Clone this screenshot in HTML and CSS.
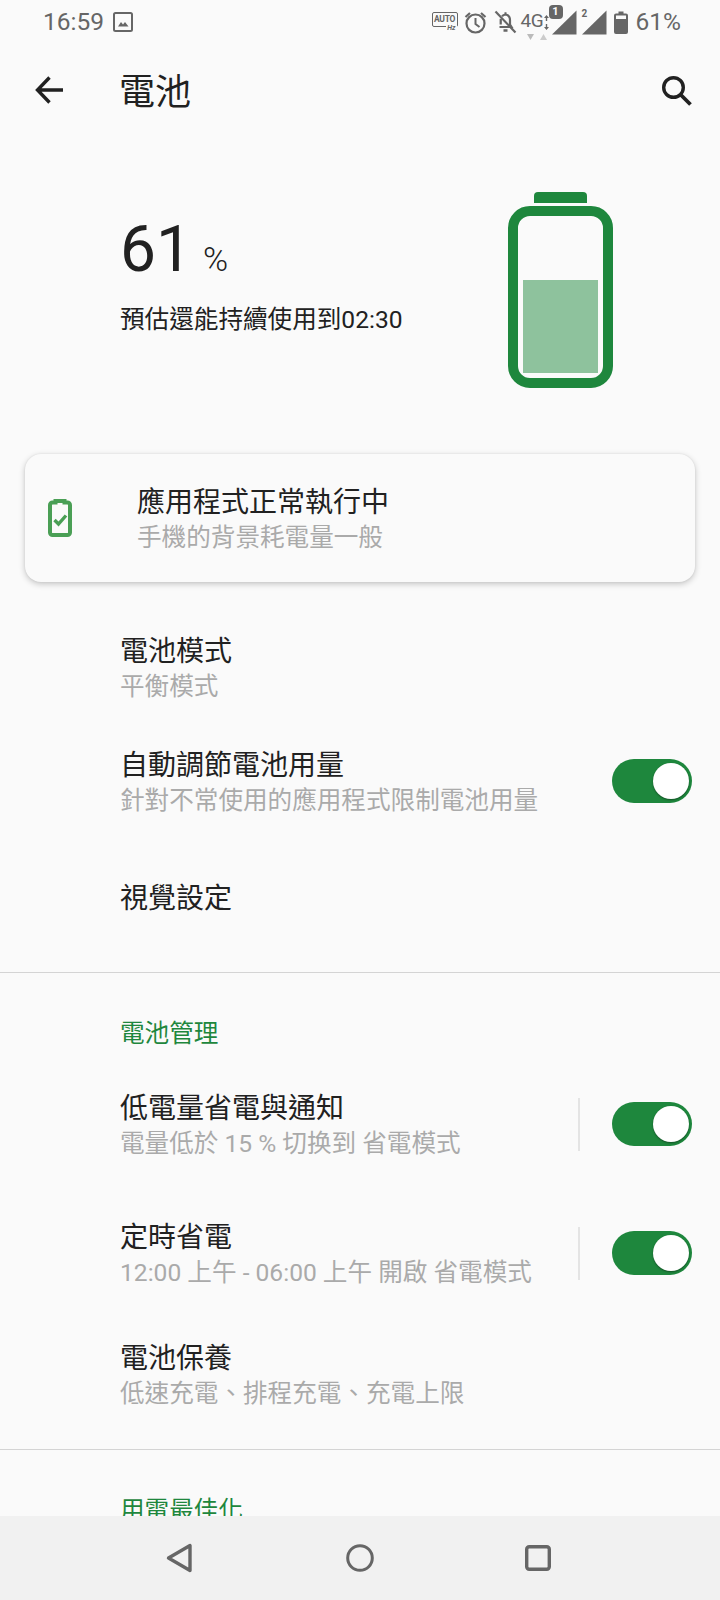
FILE: index.html
```html
<!DOCTYPE html>
<html lang="zh-Hant">

<head>
    <meta charset="UTF-8">
    <meta name="viewport" content="width=device-width, initial-scale=1.0">
    <title>電池</title>
    <link rel="stylesheet" href="styles.css">
</head>

<body>
    <div class="phone">
        <div class="status-bar">
            <div class="status-left">
                <span class="clock">16:59</span>
                <svg class="ic-gallery" width="20" height="20" viewBox="0 0 20 20">
                    <rect x="1" y="1" width="18" height="18" rx="1.5" fill="none" stroke="#666" stroke-width="2"/>
                    <path d="M5 14.5 L8 10 L10 12.5 L12 10 L15.5 14.5 Z" fill="#666"/>
                </svg>
            </div>
            <div class="status-right">
                <div class="auto-hz">
                    <span class="auto-box">AUTO</span>
                    <span class="auto-unit">Hz</span>
                </div>
                <svg class="ic-alarm" width="23" height="23" viewBox="0 0 23 23">
                    <circle cx="11.5" cy="12.5" r="9" fill="none" stroke="#666" stroke-width="2.2"/>
                    <path d="M11.5 7 V13 L15.5 16" fill="none" stroke="#666" stroke-width="2"/>
                    <path d="M1.5 6 L6 2 M21.5 6 L17 2" fill="none" stroke="#666" stroke-width="2.2"/>
                </svg>
                <svg class="ic-bell" width="23" height="24" viewBox="0 0 23 24">
                    <path d="M5.5 17 H17.5 L16 14.5 V10 C16 7 14.5 5 11.5 4.5 C10 4.8 9 5.3 8 6.3 M6.8 9 C6.7 9.5 6.7 10 6.7 10.5 V14.5 Z" fill="none" stroke="#666" stroke-width="2.2"/>
                    <path d="M10.5 3.5 H12.5 M9.5 20.5 H13.5" stroke="#666" stroke-width="2.4" fill="none"/>
                    <path d="M1.5 1.5 L21.5 22.5" stroke="#666" stroke-width="2.2"/>
                </svg>
                <div class="net">
                    <span class="net-label">4G</span>
                    <svg class="ic-updown" width="7" height="15" viewBox="0 0 7 15">
                        <path d="M3.5 0 L6 3 H1 Z M3.5 15 L1 12 H6 Z M2.8 3 H4.2 V6 H2.8 Z M2.8 9 H4.2 V12 H2.8 Z" fill="#666"/>
                    </svg>
                    <svg class="ic-net-arrows" width="24" height="6" viewBox="0 0 24 6">
                        <path d="M0 0 H7 L3.5 6 Z" fill="#bbb"/>
                        <path d="M13 6 H20 L16.5 0 Z" fill="#ccc"/>
                    </svg>
                </div>
                <div class="signal">
                    <svg width="26" height="25" viewBox="0 0 26 25">
                        <path d="M1 24.5 L25.5 0.5 V24.5 Z" fill="#666"/>
                    </svg>
                    <span class="sim-badge">1</span>
                </div>
                <div class="signal">
                    <svg width="26" height="25" viewBox="0 0 26 25">
                        <path d="M1 24.5 L25.5 0.5 V24.5 Z" fill="#666"/>
                    </svg>
                    <span class="sim-plain">2</span>
                </div>
                <svg class="ic-batt" width="14" height="23" viewBox="0 0 14 23">
                    <path d="M4.5 0.5 H9.5 V2.5 H12 A2 2 0 0 1 14 4.5 V21 A2 2 0 0 1 12 23 H2 A2 2 0 0 1 0 21 V4.5 A2 2 0 0 1 2 2.5 H4.5 Z" fill="#666"/>
                    <rect x="2" y="4.5" width="10" height="3.5" fill="#fafafa"/>
                </svg>
                <span class="status-pct">61%</span>
            </div>
        </div>

        <div class="toolbar">
            <svg class="ic-back" width="28" height="28" viewBox="0 0 28 28">
                <path d="M28 14 H3 M14.500 1.500 L2.500 14 L14.500 26.500" fill="none" stroke="#212121" stroke-width="3.400"/>
            </svg>
            <h1 class="page-title">電池</h1>
            <svg class="ic-search" width="31" height="31" viewBox="0 0 31 31">
                <circle cx="12.500" cy="12.500" r="9.800" fill="none" stroke="#212121" stroke-width="3.400"/>
                <path d="M19.500 19.500 L29.500 29.500" stroke="#212121" stroke-width="3.800"/>
            </svg>
        </div>

        <div class="hero">
            <div class="hero-text">
                <div class="level"><span class="level-num">61</span><span class="level-pct">%</span></div>
                <div class="estimate">預估還能持續使用到02:30</div>
            </div>
            <div class="big-battery">
                <div class="big-battery-cap"></div>
                <div class="big-battery-body">
                    <div class="big-battery-fill"></div>
                </div>
            </div>
        </div>

        <div class="status-card">
            <svg class="ic-check-batt" width="24" height="38" viewBox="0 0 24 38">
                <path d="M7.500 3.500 V2 H16.500 V3.500 H19.500 A2.500 2.500 0 0 1 22 6 V33.500 A2.500 2.500 0 0 1 19.500 36 H4.500 A2.500 2.500 0 0 1 2 33.500 V6 A2.500 2.500 0 0 1 4.500 3.500 Z" fill="none" stroke="#4a9f55" stroke-width="4"/>
                <path d="M6.500 21 L10.500 25 L18 16.500" fill="none" stroke="#4a9f55" stroke-width="3.400"/>
            </svg>
            <div class="card-text">
                <div class="row-title">應用程式正常執行中</div>
                <div class="row-sub">手機的背景耗電量一般</div>
            </div>
        </div>

        <div class="content">
            <div class="row row-mode">
                <div class="row-body">
                    <div class="row-title">電池模式</div>
                    <div class="row-sub">平衡模式</div>
                </div>
            </div>
            <div class="row row-auto">
                <div class="row-body">
                    <div class="row-title">自動調節電池用量</div>
                    <div class="row-sub">針對不常使用的應用程式限制電池用量</div>
                </div>
                <div class="switch"></div>
            </div>
            <div class="row row-visual">
                <div class="row-body">
                    <div class="row-title">視覺設定</div>
                </div>
            </div>

            <div class="divider"></div>

            <div class="section-head">電池管理</div>
            <div class="row row-low">
                <div class="row-body">
                    <div class="row-title">低電量省電與通知</div>
                    <div class="row-sub">電量低於 15 % 切换到 省電模式</div>
                </div>
                <div class="vline"></div>
                <div class="switch"></div>
            </div>
            <div class="row row-timer">
                <div class="row-body">
                    <div class="row-title">定時省電</div>
                    <div class="row-sub">12:00 上午 - 06:00 上午 開啟 省電模式</div>
                </div>
                <div class="vline"></div>
                <div class="switch"></div>
            </div>
            <div class="row row-care">
                <div class="row-body">
                    <div class="row-title">電池保養</div>
                    <div class="row-sub">低速充電、排程充電、充電上限</div>
                </div>
            </div>

            <div class="divider divider-last"></div>

            <div class="section-head">用電最佳化</div>
        </div>

        <div class="nav-bar">
            <svg width="28" height="30" viewBox="0 0 28 30">
                <path d="M2.500 15 L24 2.500 V27.500 Z" fill="none" stroke="#666" stroke-width="3.400" stroke-linejoin="round"/>
            </svg>
            <svg width="28" height="28" viewBox="0 0 28 28">
                <circle cx="14" cy="14" r="12.300" fill="none" stroke="#666" stroke-width="3"/>
            </svg>
            <svg width="26" height="26" viewBox="0 0 26 26">
                <rect x="1.700" y="1.700" width="22.600" height="22.600" rx="2.500" fill="none" stroke="#666" stroke-width="3.400"/>
            </svg>
        </div>
    </div>
</body>

</html>
```

FILE: styles.css
```css
* {
    box-sizing: border-box;
}

body {
    margin: 0;
    background: #fafafa;
    font-family: Roboto, "Noto Sans CJK TC", sans-serif;
    color: #212121;
}

.phone {
    width: 720px;
    height: 1600px;
    display: flex;
    flex-direction: column;
    overflow: hidden;
    background: #fafafa;
}

/* status bar */
.status-bar {
    height: 44px;
    flex: none;
    display: flex;
    justify-content: space-between;
    align-items: center;
    padding: 0 39px 0 43px;
    color: #666;
}

.status-left {
    display: flex;
    align-items: center;
    gap: 9px;
}

.clock {
    font-size: 24.5px;
    line-height: 44px;
}

.ic-gallery {
    display: block;
}

.status-right {
    display: flex;
    align-items: center;
}

.auto-hz {
    width: 26px;
    height: 20px;
    position: relative;
    margin-right: 6px;
}

.auto-box {
    display: block;
    height: 15px;
    border: 1.5px solid #666;
    border-radius: 2px;
    font-size: 8.5px;
    font-weight: 700;
    line-height: 12px;
    text-align: center;
    letter-spacing: -0.3px;
}

.auto-unit {
    position: absolute;
    right: 1px;
    top: 12px;
    padding: 0 1px;
    font-size: 7px;
    font-weight: 700;
    font-style: italic;
    line-height: 9px;
    background: #fafafa;
}

.ic-alarm {
    margin-right: 7px;
}

.ic-bell {
    margin-right: 4px;
}

.net {
    width: 30px;
    height: 32px;
    position: relative;
}

.net-label {
    font-size: 19px;
    line-height: 20px;
    letter-spacing: -0.5px;
    position: absolute;
    left: 0;
    top: 5px;
}

.ic-updown {
    position: absolute;
    left: 22px;
    top: 9px;
}

.ic-net-arrows {
    position: absolute;
    left: 6px;
    top: 28px;
}

.signal {
    width: 26px;
    height: 25px;
    position: relative;
    margin-right: 4px;
}

.signal svg {
    display: block;
}

.sim-badge {
    position: absolute;
    left: -2px;
    top: -5px;
    width: 14px;
    height: 14px;
    border-radius: 4px;
    background: #666;
    color: #fafafa;
    font-size: 11px;
    font-weight: 700;
    line-height: 14px;
    text-align: center;
}

.sim-plain {
    position: absolute;
    left: 1px;
    top: -2px;
    font-size: 10px;
    font-weight: 700;
    line-height: 12px;
}

.ic-batt {
    margin: 0 8px 0 3px;
}

.status-pct {
    font-size: 24.5px;
    line-height: 44px;
}

/* toolbar */
.toolbar {
    height: 92px;
    flex: none;
    display: flex;
    align-items: center;
    padding: 0 28px 0 35px;
}

.ic-back {
    flex: none;
}

.page-title {
    flex: 1;
    margin: 0 0 0 56px;
    padding-top: 6px;
    font-size: 36px;
    font-weight: 400;
    line-height: 48px;
}

.ic-search {
    flex: none;
}

/* hero */
.hero {
    height: 318px;
    flex: none;
    display: flex;
    justify-content: space-between;
    padding: 56px 107px 0 120px;
}

.hero-text {
    padding-top: 17px;
}

.level {
    display: flex;
    align-items: baseline;
    height: 91px;
}

.level-num {
    font-size: 64px;
    line-height: 82px;
}

.level-pct {
    font-size: 34px;
    font-weight: 300;
    margin-left: 11px;
}

.estimate {
    font-size: 24.6px;
    line-height: 36px;
    margin-top: 2px;
}

.big-battery {
    width: 105px;
}

.big-battery-cap {
    width: 53px;
    height: 11px;
    margin: 0 auto 3px;
    background: #1e873d;
    border-radius: 4px 4px 0 0;
}

.big-battery-body {
    height: 182px;
    border: 10px solid #1e873d;
    border-radius: 22px;
    padding: 0 5px 5px;
    display: flex;
    align-items: flex-end;
}

.big-battery-fill {
    width: 100%;
    height: 93px;
    background: #8ec29d;
}

/* card */
.status-card {
    height: 128px;
    flex: none;
    margin: 0 25px;
    padding: 0 0 0 23px;
    display: flex;
    align-items: center;
    gap: 65px;
    background: #fafafa;
    border-radius: 16px;
    box-shadow: 0 2px 6px rgba(0, 0, 0, 0.22), 0 0 2px rgba(0, 0, 0, 0.08);
}

.card-text {
    padding-top: 2px;
}

/* list */
.content {
    flex: 1;
    min-height: 0;
    overflow: hidden;
}

.row {
    display: flex;
    align-items: center;
    padding: 0 28px 0 120px;
}

.row-body {
    flex: 1;
}

.row-title {
    font-size: 28px;
    line-height: 40px;
}

.row-sub {
    margin-top: -3px;
    font-size: 24.6px;
    line-height: 36px;
    color: #aaa;
}

.row-mode {
    margin-top: 50px;
}

.row-auto {
    margin-top: 41px;
}

.row-visual {
    margin-top: 60px;
}

.row-low {
    margin-top: 37px;
}

.row-timer {
    margin-top: 56px;
}

.row-care {
    margin-top: 48px;
}

.divider {
    height: 1px;
    margin-top: 53px;
    background: #d4d4d4;
}

.divider-last {
    margin-top: 37px;
}

.section-head {
    margin-top: 43px;
    font-size: 24.6px;
    line-height: 36px;
    color: #1e873d;
    padding-left: 120px;
}

.vline {
    width: 2px;
    height: 53px;
    margin: 0 32px 3px 0;
    background: #e4e4e4;
}

.switch {
    width: 80px;
    height: 44px;
    flex: none;
    position: relative;
    margin-bottom: 3px;
    background: #1e873d;
    border-radius: 22px;
}

.switch::after {
    content: "";
    position: absolute;
    top: 4px;
    right: 3px;
    width: 36px;
    height: 36px;
    border-radius: 50%;
    background: #fff;
    box-shadow: 0 1px 2px rgba(0, 0, 0, 0.4);
}

/* nav */
.nav-bar {
    height: 84px;
    flex: none;
    background: #f1f1f1;
    display: flex;
    align-items: center;
    justify-content: space-between;
    padding: 0 169px 0 166px;
}
```
